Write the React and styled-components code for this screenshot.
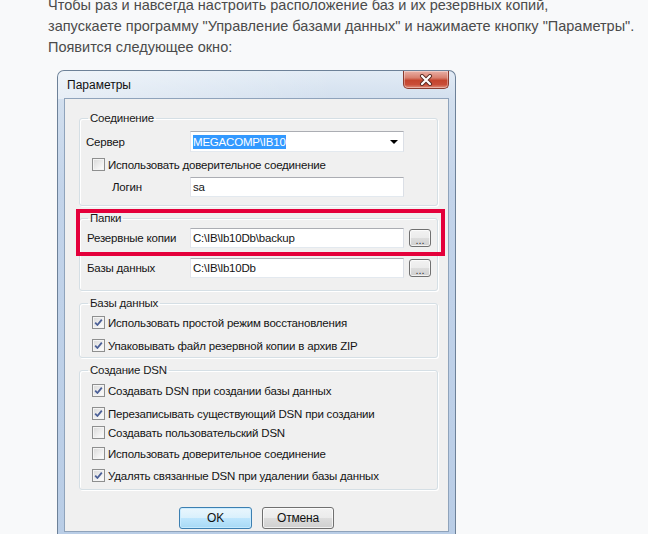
import React from "react";
import styled, { createGlobalStyle } from "styled-components";

const GlobalStyle = createGlobalStyle`
  html, body {
    margin: 0;
    padding: 0;
    background: #f8f9fa;
    overflow: hidden;
  }
  body {
    width: 648px;
    height: 534px;
  }
`;

const Page = styled.div`
  padding-left: 48px;
  font-family: "Liberation Sans", Arial, sans-serif;
`;

const Intro = styled.div`
  margin-top: -5px;
  font-size: 14.5px;
  line-height: 21px;
  color: #4b4b4b;
`;

const IntroLine = styled.div`
  white-space: nowrap;
`;

const Window = styled.div`
  margin: 12px 0 0 9px;
  width: 399px;
  box-sizing: border-box;
  border: 1px solid #6d8198;
  border-bottom: none;
  border-radius: 7px 7px 0 0;
  background: linear-gradient(to bottom, #e2ebf5 0, #d2dfee 30px, #c3d4ea 120px, #b9cde6 100%);
  padding-bottom: 8px;
`;

const TitleBar = styled.div`
  display: flex;
  align-items: center;
  height: 28px;
  padding-left: 9px;
  border-radius: 6px 6px 0 0;
  background: linear-gradient(90deg, rgba(255, 255, 255, 0.45), rgba(255, 255, 255, 0) 70%);
`;

const Title = styled.div`
  font-size: 12px;
  color: #111;
  flex: 1;
`;

const CloseButton = styled.div`
  align-self: flex-start;
  width: 46px;
  height: 18px;
  margin-right: 6px;
  box-sizing: border-box;
  border: 1px solid #8a3b2f;
  border-top: none;
  border-radius: 0 0 5px 5px;
  background: linear-gradient(to bottom, #e9b0a6 0%, #d8806f 40%, #c4442d 55%, #c94d38 80%, #e0907c 100%);
  display: flex;
  align-items: center;
  justify-content: center;
  box-shadow: inset 0 0 0 1px rgba(255, 255, 255, 0.35);
`;

const Client = styled.div`
  position: relative;
  margin: 0 7px;
  background: #f0f0f0;
  box-shadow: 0 0 0 1px #8fa3bb;
  padding: 12px 0 2px 14px;
  font-size: 11.5px;
  letter-spacing: -0.2px;
  color: #141414;
`;

const GroupBox = styled.fieldset`
  margin: ${(p) => p.$gap}px 0 0 0;
  width: 359px;
  box-sizing: border-box;
  border: 1px solid #d5dfe5;
  border-radius: 3px;
  padding: 0 0 ${(p) => p.$padBottom}px 0;
  box-shadow: inset 1px 1px 0 #fff, 1px 1px 0 #fff;
`;

const Legend = styled.legend`
  margin-left: 8px;
  padding: 0 2px;
  line-height: 15px;
  color: #1a1a1a;
`;

const FieldRow = styled.div`
  display: flex;
  align-items: center;
  margin-top: ${(p) => p.$top}px;
`;

const Label = styled.div`
  box-sizing: border-box;
  width: 110px;
  padding-left: ${(p) => p.$indent}px;
  white-space: nowrap;
`;

const TextBox = styled.div`
  position: relative;
  box-sizing: border-box;
  width: 214px;
  height: ${(p) => p.$h || 20}px;
  background: #fff;
  border: 1px solid #e3e9ef;
  border-top-color: #abadb3;
  border-left-color: #e2e3ea;
  border-right-color: #dbdfe6;
  padding-left: 2px;
  display: flex;
  align-items: center;
  white-space: nowrap;
`;

const Selected = styled.span`
  background: #3399ff;
  color: #fff;
  padding: 1px 0;
`;

const DropArrow = styled.div`
  margin-left: auto;
  margin-right: 5px;
  width: 0;
  height: 0;
  border-left: 4px solid transparent;
  border-right: 4px solid transparent;
  border-top: 4px solid #000;
`;

const BrowseButton = styled.div`
  margin-left: 5px;
  width: 22px;
  height: 18px;
  box-sizing: border-box;
  border: 1px solid #707070;
  border-radius: 3px;
  background: linear-gradient(to bottom, #f2f2f2 0%, #ebebeb 50%, #dddddd 51%, #cfcfcf 100%);
  box-shadow: inset 0 0 0 1px rgba(255, 255, 255, 0.7);
  display: flex;
  align-items: flex-end;
  justify-content: center;
  font-size: 11px;
  line-height: 12px;
  letter-spacing: 0;
  color: #333;
`;

const CheckRow = styled.label`
  display: flex;
  align-items: center;
  height: 15px;
  margin-top: ${(p) => p.$top}px;
  padding-left: 12px;
  white-space: nowrap;
`;

const Box = styled.span`
  width: 13px;
  height: 13px;
  box-sizing: border-box;
  border: 1px solid #8e8f8f;
  background: linear-gradient(135deg, #d8d8d8 0%, #f4f4f4 70%, #ffffff 100%);
  box-shadow: inset 0 0 0 1px #f4f4f4;
  margin-right: 3px;
  display: flex;
  align-items: center;
  justify-content: center;
`;

const Highlight = styled.div`
  position: absolute;
  left: 11px;
  top: 110px;
  width: 369px;
  height: 47px;
  box-sizing: border-box;
  border: 4px solid #e4003b;
  pointer-events: none;
`;

const ButtonRow = styled.div`
  display: flex;
  gap: 10px;
  margin: 17px 0 0 100px;
`;

const PushButton = styled.div`
  width: ${(p) => p.$w}px;
  height: 22px;
  box-sizing: border-box;
  border: 1px solid ${(p) => (p.$default ? "#3c7fb1" : "#707070")};
  border-radius: 3px;
  background: ${(p) =>
    p.$default
      ? "linear-gradient(to bottom, #eaf6fd 0%, #d9f0fc 50%, #bee6fd 51%, #a7d9f5 100%)"
      : "linear-gradient(to bottom, #f2f2f2 0%, #ebebeb 50%, #dddddd 51%, #cfcfcf 100%)"};
  box-shadow: inset 0 0 0 1px ${(p) => (p.$default ? "rgba(200,235,255,0.9)" : "rgba(255,255,255,0.7)")};
  display: flex;
  align-items: center;
  justify-content: center;
  font-size: 12px;
  color: #111;
`;

function Check({ checked }) {
  return (
    <Box>
      {checked && (
        <svg width="9" height="9" viewBox="0 0 9 9">
          <path d="M1.2 4.6 L3.4 7 L7.8 1.6" fill="none" stroke="#4a5f97" strokeWidth="1.8" strokeLinejoin="round" />
        </svg>
      )}
    </Box>
  );
}

function CheckItem({ checked, top, children }) {
  return (
    <CheckRow $top={top}>
      <Check checked={checked} />
      {children}
    </CheckRow>
  );
}

export default function App() {
  return (
    <>
      <GlobalStyle />
      <Page>
        <Intro>
          <IntroLine>Чтобы раз и навсегда настроить расположение баз и их резервных копий,</IntroLine>
          <IntroLine>запускаете программу "Управление базами данных" и нажимаете кнопку "Параметры".</IntroLine>
          <IntroLine>Появится следующее окно:</IntroLine>
        </Intro>
        <Window>
          <TitleBar>
            <Title>Параметры</Title>
            <CloseButton>
              <svg width="14" height="12" viewBox="0 0 14 12">
                <path d="M3 2 L11 10 M11 2 L3 10" stroke="#5a2a22" strokeWidth="4" strokeLinecap="round" />
                <path d="M3 2 L11 10 M11 2 L3 10" stroke="#ffffff" strokeWidth="2.2" strokeLinecap="round" />
              </svg>
            </CloseButton>
          </TitleBar>
          <Client>
            <GroupBox $gap={0} $padBottom={8}>
              <Legend>Соединение</Legend>
              <FieldRow $top={5}>
                <Label $indent={6}>Сервер</Label>
                <TextBox $h={21}>
                  <Selected>MEGACOMP\IB10</Selected>
                  <DropArrow />
                </TextBox>
              </FieldRow>
              <CheckItem top={5}>Использовать доверительное соединение</CheckItem>
              <FieldRow $top={5}>
                <Label $indent={32}>Логин</Label>
                <TextBox>sa</TextBox>
              </FieldRow>
            </GroupBox>

            <GroupBox $gap={5} $padBottom={12}>
              <Legend>Папки</Legend>
              <FieldRow $top={2}>
                <Label $indent={7}>Резервные копии</Label>
                <TextBox>C:\IB\lb10Db\backup</TextBox>
                <BrowseButton>...</BrowseButton>
              </FieldRow>
              <FieldRow $top={10}>
                <Label $indent={7}>Базы данных</Label>
                <TextBox>C:\IB\lb10Db</TextBox>
                <BrowseButton>...</BrowseButton>
              </FieldRow>
            </GroupBox>

            <GroupBox $gap={5} $padBottom={4}>
              <Legend>Базы данных</Legend>
              <CheckItem checked top={4}>Использовать простой режим восстановления</CheckItem>
              <CheckItem checked top={8}>Упаковывать файл резервной копии в архив ZIP</CheckItem>
            </GroupBox>

            <GroupBox $gap={5} $padBottom={6}>
              <Legend>Создание DSN</Legend>
              <CheckItem checked top={5}>Создавать DSN при создании базы данных</CheckItem>
              <CheckItem checked top={8}>Перезаписывать существующий DSN при создании</CheckItem>
              <CheckItem top={4}>Создавать пользовательский DSN</CheckItem>
              <CheckItem top={6}>Использовать доверительное соединение</CheckItem>
              <CheckItem checked top={7}>Удалять связанные DSN при удалении базы данных</CheckItem>
            </GroupBox>

            <ButtonRow>
              <PushButton $default $w={73}>OK</PushButton>
              <PushButton $w={72}>Отмена</PushButton>
            </ButtonRow>
            <Highlight />
          </Client>
        </Window>
      </Page>
    </>
  );
}
